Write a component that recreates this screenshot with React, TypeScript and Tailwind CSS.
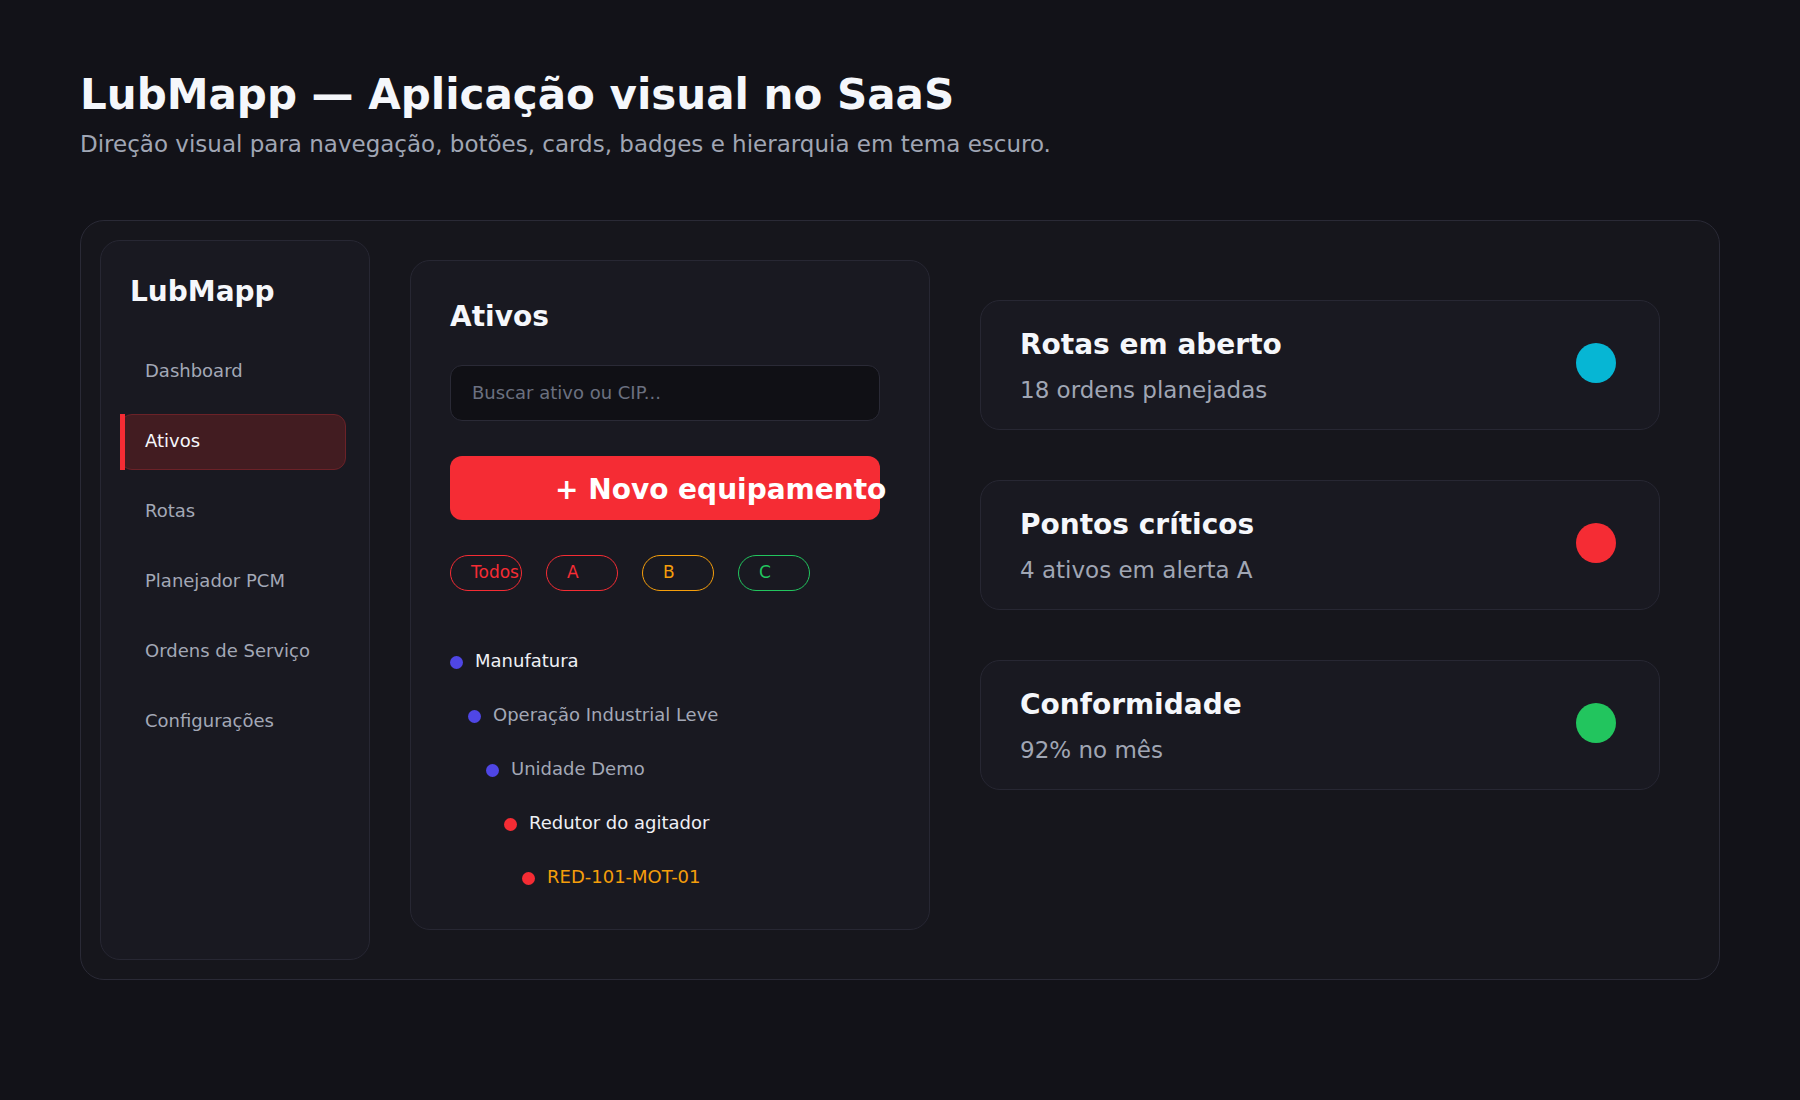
import React from 'react';

const navItems = ['Dashboard', 'Ativos', 'Rotas', 'Planejador PCM', 'Ordens de Serviço', 'Configurações'];

const chips = [
    { label: 'Todos', cls: 'border-[#f52c34] text-[#f52c34]' },
    { label: 'A', cls: 'border-[#f52c34] text-[#f52c34]' },
    { label: 'B', cls: 'border-[#f59e0b] text-[#f59e0b]' },
    { label: 'C', cls: 'border-[#22c55e] text-[#22c55e]' },
];

const tree = [
    { label: 'Manufatura', indent: 'pl-0', dot: 'bg-[#4f46e5]', text: 'text-[#eef0f5]' },
    { label: 'Operação Industrial Leve', indent: 'pl-[18px]', dot: 'bg-[#4f46e5]', text: 'text-[#a3a8b6]' },
    { label: 'Unidade Demo', indent: 'pl-[36px]', dot: 'bg-[#4f46e5]', text: 'text-[#a3a8b6]' },
    { label: 'Redutor do agitador', indent: 'pl-[54px]', dot: 'bg-[#f52c34]', text: 'text-[#eef0f5]' },
    { label: 'RED-101-MOT-01', indent: 'pl-[72px]', dot: 'bg-[#f52c34]', text: 'text-[#f59e0b]' },
];

const stats = [
    { title: 'Rotas em aberto', sub: '18 ordens planejadas', dot: 'bg-[#06b6d4]' },
    { title: 'Pontos críticos', sub: '4 ativos em alerta A', dot: 'bg-[#f52c34]' },
    { title: 'Conformidade', sub: '92% no mês', dot: 'bg-[#22c55e]' },
];

const App: React.FC = () => {
    return (
        <div className="min-h-[1100px] w-full bg-[#121218] px-20 pt-[70px] font-['DejaVu_Sans',sans-serif]">
            <h1 className="text-[42px] font-bold leading-[50px] text-[#f5f7fb]">LubMapp — Aplicação visual no SaaS</h1>
            <p className="mt-[9px] text-[23px] leading-[30px] text-[#a0a6b4]">
                Direção visual para navegação, botões, cards, badges e hierarquia em tema escuro.
            </p>

            <div className="mt-[61px] flex h-[760px] w-[1640px] items-start rounded-[24px] border border-[#2a2a36] bg-[#16161c] p-[19px]">
                {/* sidebar */}
                <aside className="h-[720px] w-[270px] shrink-0 rounded-[20px] border border-[#272733] bg-[#191921] pt-[31px]">
                    <div className="pl-[29px] text-[28px] font-bold leading-[40px] text-[#f5f7fb]">LubMapp</div>
                    <nav className="mt-[32px] flex flex-col gap-[14px] pl-[19px] pr-[23px]">
                        {navItems.map(item =>
                            item === 'Ativos' ? (
                                <div key={item} className="relative flex h-14 items-center rounded-xl border border-[#6b2228] bg-[#421c21] pb-[4px] pl-[24px] text-[18px] text-[#f5f7fb]">
                                    <span className="absolute -left-px -top-px -bottom-px w-[5px] bg-[#f52c34]" />
                                    {item}
                                </div>
                            ) : (
                                <div key={item} className="flex h-14 items-center pb-[4px] pl-[25px] text-[18px] text-[#a3a8b6]">
                                    {item}
                                </div>
                            )
                        )}
                    </nav>
                </aside>

                {/* assets panel */}
                <section className="ml-[40px] mt-[20px] h-[670px] w-[520px] shrink-0 rounded-[20px] border border-[#272733] bg-[#191921] pl-[39px] pt-[38px]">
                    <h2 className="text-[28px] font-bold leading-[36px] text-[#f5f7fb]">Ativos</h2>
                    <input
                        className="mt-[30px] block h-[56px] w-[430px] rounded-[12px] border border-[#2a2a36] bg-[#101015] pb-[2px] pl-[21px] text-[18px] text-[#e5e7eb] outline-none placeholder:text-[#6b7080]"
                        placeholder="Buscar ativo ou CIP..."
                    />
                    <button className="mt-[35px] flex h-[64px] w-[430px] items-center overflow-visible whitespace-nowrap rounded-[12px] bg-[#f52c34] pl-[105px] pt-[4px] text-left text-[28px] font-bold text-white">
                        + Novo equipamento
                    </button>
                    <div className="mt-[35px] flex gap-[24px]">
                        {chips.map(c => (
                            <div key={c.label} className={`flex h-[36px] w-[72px] items-center whitespace-nowrap rounded-full border pl-[20px] text-[17px] ${c.cls}`}>
                                {c.label}
                            </div>
                        ))}
                    </div>
                    <div className="mt-[44px] flex flex-col">
                        {tree.map(t => (
                            <div key={t.label} className={`flex h-[54px] items-center gap-3 ${t.indent}`}>
                                <span className={`h-[13px] w-[13px] rounded-full ${t.dot}`} />
                                <span className={`pb-[4px] text-[18px] ${t.text}`}>{t.label}</span>
                            </div>
                        ))}
                    </div>
                </section>

                {/* stat cards */}
                <div className="ml-[50px] mt-[60px] flex flex-col gap-[50px]">
                    {stats.map(s => (
                        <div key={s.title} className="flex h-[130px] w-[680px] items-start justify-between rounded-[20px] border border-[#272733] bg-[#191921] pl-[39px] pt-[26px]">
                            <div>
                                <div className="text-[28px] font-bold leading-[36px] text-[#f5f7fb]">{s.title}</div>
                                <div className="mt-[12px] text-[23px] leading-[30px] text-[#a0a6b4]">{s.sub}</div>
                            </div>
                            <span className={`mr-[43px] mt-[16px] h-10 w-10 rounded-full ${s.dot}`} />
                        </div>
                    ))}
                </div>
            </div>
        </div>
    );
};

export default App;
